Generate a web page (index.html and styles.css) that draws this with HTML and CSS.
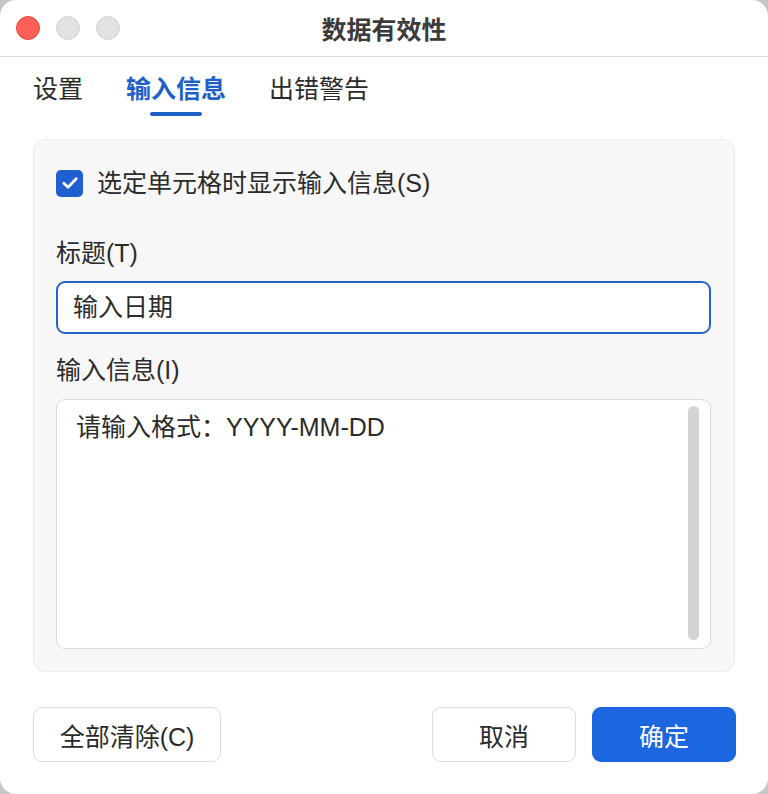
FILE: index.html
```html
<!DOCTYPE html>
<html lang="zh-CN">
<head>
    <meta charset="UTF-8">
    <meta name="viewport" content="width=device-width, initial-scale=1.0">
    <title>数据有效性</title>
    <link rel="stylesheet" href="styles.css">
</head>
<body>

<div class="window">
    <div class="titlebar">
        <div class="lights">
            <span class="light red"></span>
            <span class="light"></span>
            <span class="light"></span>
        </div>
        <div class="title">数据有效性</div>
        <div></div>
    </div>

    <div class="tabs">
        <div class="tab">设置</div>
        <div class="tab active">输入信息</div>
        <div class="tab">出错警告</div>
    </div>

    <div class="panel">
        <label class="check-row">
            <span class="checkbox">
                <svg width="20" height="20" viewBox="0 0 20 20"><polyline points="3.8,10.2 8,14.2 16.2,5.8" fill="none" stroke="#fff" stroke-width="2.7" stroke-linecap="round" stroke-linejoin="round"/></svg>
            </span>
            <span>选定单元格时显示输入信息(S)</span>
        </label>

        <div class="field-label first">标题(T)</div>
        <div class="input">输入日期</div>

        <div class="field-label">输入信息(I)</div>
        <div class="textarea">
            <div class="textarea-text">请输入格式：YYYY-MM-DD</div>
            <div class="scrollbar"></div>
        </div>
    </div>

    <div class="footer">
        <button class="btn">全部清除(C)</button>
        <div class="spacer"></div>
        <button class="btn btn-small">取消</button>
        <button class="btn btn-small primary">确定</button>
    </div>
</div>

</body>
</html>
```

FILE: styles.css
```css
body {
    margin: 0;
    background: #c6c6c6;
    font-family: "Liberation Sans", "Noto Sans CJK SC", sans-serif;
    color: #2b2b2b;
}
.window {
    width: 768px;
    height: 794px;
    background: #fff;
    border-radius: 16px;
    overflow: hidden;
}
.titlebar {
    height: 56px;
    border-bottom: 1px solid #dedede;
    display: grid;
    grid-template-columns: 1fr auto 1fr;
    align-items: center;
}
.lights {
    display: flex;
    gap: 16px;
    padding-left: 16px;
}
.light {
    width: 22px;
    height: 22px;
    border-radius: 50%;
    background: #e2e2e2;
    border: 1px solid #d0d0d0;
}
.light.red {
    background: #fe5f57;
    border-color: #e9483f;
}
.title {
    font-size: 25px;
    font-weight: bold;
    color: #3b3b3b;
}
.tabs {
    display: flex;
    gap: 43px;
    padding: 16px 33px 0;
}
.tab {
    font-size: 25px;
    line-height: 32px;
    padding-bottom: 11px;
    position: relative;
}
.tab.active {
    color: #1f5fc8;
    font-weight: bold;
}
.tab.active::after {
    content: "";
    position: absolute;
    left: 50%;
    bottom: 0;
    width: 52px;
    height: 4px;
    margin-left: -26px;
    border-radius: 2px;
    background: #1f5fc8;
}
.panel {
    margin: 23px 33px 0;
    height: 533px;
    box-sizing: border-box;
    background: #f7f7f7;
    border: 1px solid #ebebeb;
    border-radius: 12px;
    padding: 27px 23px 22px 22px;
}
.check-row {
    display: flex;
    align-items: center;
    gap: 14px;
    font-size: 25px;
    line-height: 32px;
}
.checkbox {
    width: 27px;
    height: 27px;
    border-radius: 5px;
    background: #1f5fcf;
    display: flex;
    align-items: center;
    justify-content: center;
}
.field-label {
    font-size: 25px;
    line-height: 32px;
    margin-top: 20px;
}
.field-label.first {
    margin-top: 38px;
}
.input {
    margin-top: 12px;
    height: 53px;
    box-sizing: border-box;
    border: 2px solid #2563c9;
    border-radius: 9px;
    background: #fff;
    padding-left: 15px;
    font-size: 25px;
    line-height: 49px;
}
.textarea {
    margin-top: 13px;
    height: 250px;
    box-sizing: border-box;
    border: 1px solid #dadada;
    border-radius: 9px;
    background: #fff;
    display: flex;
    padding: 6px 11px 8px 19px;
}
.textarea-text {
    flex: 1;
    padding-top: 5px;
    font-size: 25px;
    line-height: 32px;
}
.scrollbar {
    width: 11px;
    border-radius: 6px;
    background: #d4d4d4;
}
.footer {
    display: flex;
    gap: 16px;
    padding: 35px 32px 0 33px;
}
.spacer {
    flex: 1;
}
.btn {
    height: 55px;
    width: 188px;
    border: 1.5px solid #dcdcdc;
    border-radius: 9px;
    background: #fff;
    font-family: inherit;
    font-size: 25px;
    color: #2b2b2b;
    padding: 0;
}
.btn-small {
    width: 144px;
}
.btn.primary {
    background: #1c66e0;
    border-color: #1c66e0;
    color: #fff;
}
```
